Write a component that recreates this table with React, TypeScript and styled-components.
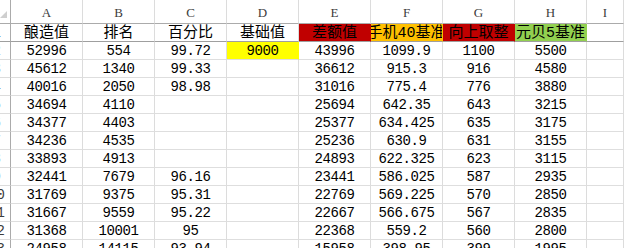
import React from "react";
import styled, { createGlobalStyle } from "styled-components";

const GlobalStyle = createGlobalStyle`
  html, body {
    margin: 0;
    padding: 0;
    background: #fff;
    overflow: hidden;
  }
`;

const COLS = ["A", "B", "C", "D", "E", "F", "G", "H", "I"];

const headers: { text: string; bg?: string }[] = [
  { text: "酿造值" },
  { text: "排名" },
  { text: "百分比" },
  { text: "基础值" },
  { text: "差额值", bg: "#c00000" },
  { text: "手机40基准", bg: "#ffc000" },
  { text: "向上取整", bg: "#c00000" },
  { text: "元贝5基准", bg: "#92d050" },
  { text: "" },
];

const rows: string[][] = [
  ["52996", "554", "99.72", "9000", "43996", "1099.9", "1100", "5500"],
  ["45612", "1340", "99.33", "", "36612", "915.3", "916", "4580"],
  ["40016", "2050", "98.98", "", "31016", "775.4", "776", "3880"],
  ["34694", "4110", "", "", "25694", "642.35", "643", "3215"],
  ["34377", "4403", "", "", "25377", "634.425", "635", "3175"],
  ["34236", "4535", "", "", "25236", "630.9", "631", "3155"],
  ["33893", "4913", "", "", "24893", "622.325", "623", "3115"],
  ["32441", "7679", "96.16", "", "23441", "586.025", "587", "2935"],
  ["31769", "9375", "95.31", "", "22769", "569.225", "570", "2850"],
  ["31667", "9559", "95.22", "", "22667", "566.675", "567", "2835"],
  ["31368", "10001", "95", "", "22368", "559.2", "560", "2800"],
  ["24958", "14115", "93.94", "", "15958", "398.95", "399", "1995"],
];

const Sheet = styled.div`
  display: grid;
  grid-template-columns: 11px repeat(8, 72px) 1fr;
  grid-template-rows: 24px 18px;
  grid-auto-rows: 18px;
  height: 248px;
  overflow: hidden;
  font-family: "Liberation Mono", "Noto Sans CJK SC", monospace;
  color: #000;
`;

const Corner = styled.div`
  position: relative;
  border-right: 1px solid #ababab;
  border-bottom: 1px solid #ababab;
  box-sizing: border-box;
  overflow: hidden;

  svg {
    position: absolute;
    left: 0;
    top: 11px;
  }
`;

const ColHead = styled.div`
  display: flex;
  align-items: flex-end;
  justify-content: center;
  padding-bottom: 3px;
  box-sizing: border-box;
  border-right: 1px solid #dcdcdc;
  border-bottom: 1px solid #ababab;
  font-family: "Liberation Serif", serif;
  font-size: 13px;
  line-height: 14px;
  color: #3c3c3c;
`;

const RowHead = styled.div<{ $frozen?: boolean }>`
  box-sizing: border-box;
  overflow: hidden;
  border-right: 1px solid #ababab;
  border-bottom: 1px solid ${(p) => (p.$frozen ? "#9f9f9f" : "#dcdcdc")};
  display: flex;
  align-items: center;
  padding-top: 2px;
`;

const RowNum = styled.span`
  flex: none;
  width: 27px;
  margin-left: -17px;
  text-align: center;
  font-size: 14px;
  line-height: 15px;
  letter-spacing: -0.4px;
  color: #3c3c3c;
`;

const Cell = styled.div<{ $bg?: string; $frozen?: boolean; $title?: boolean }>`
  box-sizing: border-box;
  display: flex;
  align-items: center;
  justify-content: center;
  overflow: hidden;
  white-space: nowrap;
  padding-top: ${(p) => (p.$title ? "1px" : "2px")};
  background: ${(p) => p.$bg ?? "#fff"};
  border-right: 1px solid ${(p) => (p.$bg ? p.$bg : "#dcdcdc")};
  border-bottom: 1px solid ${(p) => (p.$frozen ? "#9f9f9f" : "#dedede")};
  font-size: ${(p) => (p.$title ? "15px" : "14px")};
  line-height: 15px;
  letter-spacing: ${(p) => (p.$title ? "0" : "-0.4px")};

  span {
    flex: none;
  }
`;

export default function App() {
  return (
    <>
      <GlobalStyle />
      <Sheet>
        <Corner>
          <svg width="8" height="8" viewBox="0 0 8 8">
            <polygon points="7,0 7,7 0,7" fill="#cfcfcf" />
          </svg>
        </Corner>
        {COLS.map((c) => (
          <ColHead key={c}>{c}</ColHead>
        ))}

        <RowHead $frozen>
          <RowNum>1</RowNum>
        </RowHead>
        {headers.map((h, i) => (
          <Cell key={i} $bg={h.bg} $frozen $title>
            <span>{h.text}</span>
          </Cell>
        ))}

        {rows.map((r, ri) => (
          <React.Fragment key={ri}>
            <RowHead>
              <RowNum>{ri + 2}</RowNum>
            </RowHead>
            {r.map((v, ci) => (
              <Cell key={ci} $bg={ri === 0 && ci === 3 ? "#ffff00" : undefined}>
                <span>{v}</span>
              </Cell>
            ))}
            <Cell />
          </React.Fragment>
        ))}
      </Sheet>
    </>
  );
}
